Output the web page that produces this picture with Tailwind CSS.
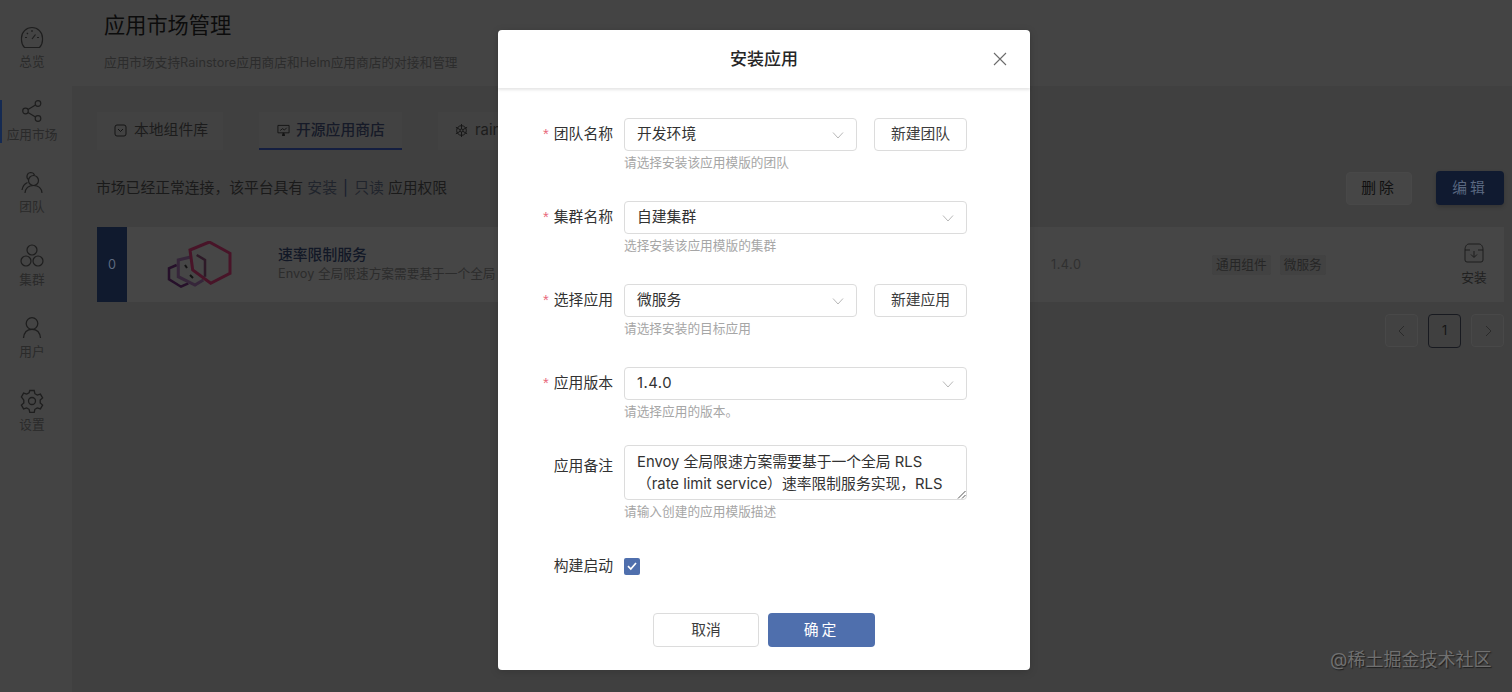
<!DOCTYPE html>
<html lang="zh">
<head>
<meta charset="utf-8">
<title>安装应用</title>
<script src="https://cdn.jsdelivr.net/npm/@tailwindcss/browser@4"></script>
</head>
<body class="m-0 h-[692px] w-[1512px] overflow-hidden bg-[#404040] font-['Inter','Noto_Sans_CJK_SC',sans-serif] text-[#2e2e2e]">
<div class="flex h-[692px] w-[1512px]">
  <!-- sidebar -->
  <nav class="flex w-[72px] shrink-0 flex-col items-start bg-[#444444] pt-[26px] pr-[8px] text-[12.7px] text-[#2a2a2a] [&>div]:h-[72.5px]">
    <div class="relative flex w-full flex-col items-center">
      <svg class="h-6 w-6" viewBox="0 0 24 24" fill="none" stroke="#1e1e1e" stroke-width="1.2"><path d="M4.500 21.500C2.600 19.600 1.500 17 1.500 14V12a10.500 10.500 0 0 1 21 0v2c0 3-1.100 5.600-3 7.500z"/><path d="M12 13l3.500-4.500M12 4v2M5 11.500h2M17 11.500h2M6.800 6.800l1.200 1.200"/></svg>
      <span class="mt-[3px] leading-[18px]">总览</span>
    </div>
    <div class="relative flex w-full flex-col items-center">
      <span class="absolute left-0 top-[1.5px] h-[43px] w-[2px] bg-[#152a52]"></span>
      <svg class="h-6 w-6" viewBox="0 0 24 24" fill="none" stroke="#1e1e1e" stroke-width="1.200"><circle cx="18" cy="4.500" r="2.800"/><circle cx="5.500" cy="12" r="2.800"/><circle cx="18" cy="19.500" r="2.800"/><path d="M8 10.500l7.500-4.500M8 13.500l7.500 4.500"/></svg>
      <span class="mt-[3px] whitespace-nowrap leading-[18px]">应用市场</span>
    </div>
    <div class="relative flex w-full flex-col items-center">
      <svg class="h-6 w-6" viewBox="0 0 24 24" fill="none" stroke="#1e1e1e" stroke-width="1.200"><circle cx="13.500" cy="9.500" r="5"/><path d="M5 22c.5-5 3.500-7.500 8.500-7.500S21.500 17 22 22M8.500 8.500C6 7 6.500 2 10.500 1.500c2 0 3.500 1 4 2.500M7.500 11.500C4 13 2.500 16 2 19"/></svg>
      <span class="mt-[3px] leading-[18px]">团队</span>
    </div>
    <div class="relative flex w-full flex-col items-center">
      <svg class="h-6 w-6" viewBox="0 0 24 24" fill="none" stroke="#1e1e1e" stroke-width="1.200"><circle cx="12" cy="6" r="5"/><circle cx="6" cy="17" r="5"/><circle cx="18" cy="17" r="5"/></svg>
      <span class="mt-[3px] leading-[18px]">集群</span>
    </div>
    <div class="relative flex w-full flex-col items-center">
      <svg class="h-6 w-6" viewBox="0 0 24 24" fill="none" stroke="#1e1e1e" stroke-width="1.300"><circle cx="12" cy="7.500" r="5.800"/><path d="M3.500 22c.5-5.500 3.800-8.700 8.500-8.700s8 3.200 8.500 8.700"/></svg>
      <span class="mt-[3px] leading-[18px]">用户</span>
    </div>
    <div class="relative flex w-full flex-col items-center">
      <svg class="h-6 w-6" viewBox="0 0 24 24" fill="none" stroke="#1e1e1e" stroke-width="1.300"><path d="M9.800 1.500h4.400l.7 3.200 2.400 1.400 3.100-1 2.200 3.800-2.400 2.200v2.800l2.400 2.200-2.200 3.800-3.100-1-2.400 1.400-.7 3.200H9.800l-.7-3.200-2.400-1.400-3.100 1-2.200-3.800 2.400-2.200v-2.800L1.400 7.900l2.200-3.800 3.100 1 2.400-1.400z"/><circle cx="12" cy="12" r="3.500"/></svg>
      <span class="mt-[3px] leading-[18px]">设置</span>
    </div>
  </nav>

  <!-- main -->
  <main class="flex min-w-0 flex-1 flex-col">
    <header class="h-[86px] shrink-0 bg-[#444444] pl-[32px]">
      <h1 class="pt-[10px] text-[21.2px] font-normal leading-[30px] text-[#0c0c0c]">应用市场管理</h1>
      <p class="mt-[14px] text-[12.7px] leading-[18px] text-[#2c2c2c]">应用市场支持Rainstore应用商店和Helm应用商店的对接和管理</p>
    </header>
    <section class="flex-1 pl-[25px] pr-[8px]">
      <div class="flex h-[64px] items-end gap-[36px] text-[14.8px] text-[#1c1c1c]">
        <div class="flex h-[38px] w-[126px] items-center gap-[7px] bg-[#424242] pb-[2px] pl-[17px]">
          <svg class="h-[13px] w-[13px]" viewBox="0 0 13 13" fill="none" stroke="#141414" stroke-width="1"><rect x="1" y="1" width="11" height="11" rx="2"/><path d="M4 5l2.500 2.500L9 5"/></svg>
          本地组件库
        </div>
        <div class="flex h-[38px] w-[143px] items-center gap-[6px] border-b-2 border-[#141e40] bg-[#424242] pl-[18px] font-medium text-[#161a28]">
          <svg class="h-[13px] w-[13px]" viewBox="0 0 14 14" fill="none" stroke="#141414" stroke-width="1"><path d="M1 1.500h12v8H1z"/><path d="M3.500 7l2.500-2 2 1.500 2.500-2.500"/><path d="M5.500 12h3M7 9.500V12" stroke-width="2"/></svg>
          开源应用商店
        </div>
        <div class="flex h-[38px] w-[130px] items-center gap-[7px] bg-[#424242] pb-[2px] pl-[17px]">
          <svg class="h-[13px] w-[13px]" viewBox="0 0 14 14" fill="none" stroke="#141414" stroke-width="1"><circle cx="7" cy="7" r="5.200"/><circle cx="7" cy="7" r="1.600"/><path d="M7 0v5.400M7 8.600V14M1 3.500l4.600 2.700M8.400 7.800L13 10.500M1 10.500l4.600-2.700M8.400 6.200L13 3.500"/></svg>
          rainbond
        </div>
      </div>
      <div class="mt-[20px] flex h-[36px] items-center justify-between">
        <p class="ml-[-1px] text-[14.8px] leading-[22px] text-[#1a1a1a]">市场已经正常连接，该平台具有 <span class="text-[#20242c]">安装</span> <span class="mx-[2px] text-[#161e2e]">|</span> <span class="text-[#20242c]">只读</span> 应用权限</p>
        <div class="flex items-center gap-[24px]">
          <span class="flex h-[33px] w-[66px] items-center justify-center rounded-[4px] border border-[#484848] bg-[#464646] text-[14.8px] tracking-[3px] text-[#101010]">删除</span>
          <span class="flex h-[34px] w-[68px] items-center justify-center rounded-[4px] bg-[#101a30] text-[14.8px] tracking-[3px] text-[#5a6880] shadow-[0_2px_4px_rgba(0,0,0,0.2)]">编辑</span>
        </div>
      </div>
      <article class="mt-[21px] flex h-[75px] items-center bg-[#464646]">
        <div class="flex h-full w-[30px] items-center justify-center bg-[#101a2e] text-[12.7px] text-[#5e6a80]">0</div>
        <svg class="ml-[40px] h-[48px] w-[66px]" viewBox="0 0 66 48" fill="none">
          <path d="M9.700 24L2 27.300v11l12 7.400 7.300-3.400" stroke="#26102a" stroke-width="2.500"/>
          <path d="M24.700 15.700L11.300 19v16.700L28 44l8.300-5" stroke="#36263a" stroke-width="3"/>
          <path d="M42.300 1L63 12.300v20L43.700 42.300l-18-13.300L23 9z" stroke="#481428" stroke-width="3"/>
          <path d="M29.700 14L38 19v16.700" stroke="#2e1a28" stroke-width="2.500"/>
          <path d="M18 24l2 3M23 34l3 3" stroke="#141414" stroke-width="2"/>
        </svg>
        <div class="ml-[45px] w-[220px] shrink-0 whitespace-nowrap pb-[3px]">
          <h2 class="text-[14.8px] font-medium leading-[22px] text-[#121826]">速率限制服务</h2>
          <p class="mt-[-1px] text-[12.7px] leading-[18px] text-[#2c2c2c]">Envoy 全局限速方案需要基于一个全局</p>
        </div>
        <span class="ml-[553px] w-[161px] shrink-0 text-[12.7px] tracking-[0.5px] text-[#303030]">1.4.0</span>
        <div class="flex shrink-0 gap-[9px] text-[12.7px] text-[#262626]">
          <span class="rounded-[2px] bg-[#424242] px-[4px] leading-[20px]">通用组件</span>
          <span class="rounded-[2px] bg-[#424242] px-[4px] leading-[20px]">微服务</span>
        </div>
        <div class="ml-auto flex w-[60px] flex-col items-center text-[12.7px] text-[#202020]">
          <svg class="h-[20px] w-[20px]" viewBox="0 0 20 20" fill="none" stroke="#1c1c1c" stroke-width="1"><path d="M1 7c0-4 2-6 4-6h10c2 0 4 2 4 6v10a2 2 0 0 1-2 2H3a2 2 0 0 1-2-2zM1 7h5M14 7h5"/><path d="M10 8v6M7 11.500l3 3 3-3"/></svg>
          <span class="mt-[6px] leading-[18px]">安装</span>
        </div>
      </article>
      <div class="mt-[12px] flex justify-end gap-[10px] text-[12.7px] text-[#141414]">
        <span class="flex h-[33px] w-[33px] items-center justify-center rounded-[4px] border border-[#484848] bg-[#424242]"><svg class="h-[12px] w-[12px]" viewBox="0 0 12 12" fill="none" stroke="#2a2a2a"><path d="M8 1L3 6l5 5"/></svg></span>
        <span class="flex h-[34px] w-[33px] items-center justify-center rounded-[4px] border border-[#181a20]">1</span>
        <span class="flex h-[33px] w-[33px] items-center justify-center rounded-[4px] border border-[#484848] bg-[#424242]"><svg class="h-[12px] w-[12px]" viewBox="0 0 12 12" fill="none" stroke="#2a2a2a"><path d="M4 1l5 5-5 5"/></svg></span>
      </div>
    </section>
  </main>
</div>

<!-- modal -->
<div role="dialog" class="absolute left-[498px] top-[30px] flex h-[640px] w-[532px] flex-col rounded-[4px] bg-white text-[14.8px] text-[#323232] shadow-[0_2px_8px_rgba(0,0,0,0.15)]">
  <div class="relative flex h-[58px] shrink-0 items-center justify-center rounded-t-[4px] shadow-[0_2px_3px_rgba(0,0,0,0.1)]">
    <h3 class="text-[17px] font-medium leading-[24px] text-[#262626]">安装应用</h3>
    <svg class="absolute right-[23px] top-[22px] h-[14px] w-[14px]" viewBox="0 0 14 14" fill="none" stroke="#6b6b6b" stroke-width="1.100"><path d="M1 1l12 12M13 1L1 13"/></svg>
  </div>
  <form class="flex flex-1 flex-col pt-[30px]">
    <div class="flex h-[83px] items-start">
      <label class="flex h-[32px] w-[115px] shrink-0 items-center justify-end"><i class="mr-[5px] font-['Liberation_Sans',sans-serif] not-italic text-[#e8677a]">*</i>团队名称</label>
      <div class="ml-[11px]">
        <div class="flex gap-[17px]">
          <div class="flex h-[33px] w-[233px] items-center justify-between rounded-[4px] border border-[#dcdcdc] pl-[12px] pr-[12px]">开发环境<svg class="h-[12px] w-[12px]" viewBox="0 0 12 12" fill="none" stroke="#b8b8b8"><path d="M1 3.500l5 5.500 5-5.500"/></svg></div>
          <div class="flex h-[33px] w-[93px] items-center justify-center rounded-[4px] border border-[#dcdcdc] text-[#3c3c3c]">新建团队</div>
        </div>
        <p class="text-[12.7px] leading-[24px] text-[#a6a6a6]">请选择安装该应用模版的团队</p>
      </div>
    </div>
    <div class="flex h-[83px] items-start">
      <label class="flex h-[32px] w-[115px] shrink-0 items-center justify-end"><i class="mr-[5px] font-['Liberation_Sans',sans-serif] not-italic text-[#e8677a]">*</i>集群名称</label>
      <div class="ml-[11px]">
        <div class="flex h-[33px] w-[343px] items-center justify-between rounded-[4px] border border-[#dcdcdc] pl-[12px] pr-[12px]">自建集群<svg class="h-[12px] w-[12px]" viewBox="0 0 12 12" fill="none" stroke="#b8b8b8"><path d="M1 3.500l5 5.500 5-5.500"/></svg></div>
        <p class="text-[12.7px] leading-[24px] text-[#a6a6a6]">选择安装该应用模版的集群</p>
      </div>
    </div>
    <div class="flex h-[83px] items-start">
      <label class="flex h-[32px] w-[115px] shrink-0 items-center justify-end"><i class="mr-[5px] font-['Liberation_Sans',sans-serif] not-italic text-[#e8677a]">*</i>选择应用</label>
      <div class="ml-[11px]">
        <div class="flex gap-[17px]">
          <div class="flex h-[33px] w-[233px] items-center justify-between rounded-[4px] border border-[#dcdcdc] pl-[12px] pr-[12px]">微服务<svg class="h-[12px] w-[12px]" viewBox="0 0 12 12" fill="none" stroke="#b8b8b8"><path d="M1 3.500l5 5.500 5-5.500"/></svg></div>
          <div class="flex h-[33px] w-[93px] items-center justify-center rounded-[4px] border border-[#dcdcdc] text-[#3c3c3c]">新建应用</div>
        </div>
        <p class="text-[12.7px] leading-[24px] text-[#a6a6a6]">请选择安装的目标应用</p>
      </div>
    </div>
    <div class="flex h-[78px] items-start">
      <label class="flex h-[32px] w-[115px] shrink-0 items-center justify-end"><i class="mr-[5px] font-['Liberation_Sans',sans-serif] not-italic text-[#e8677a]">*</i>应用版本</label>
      <div class="ml-[11px]">
        <div class="flex h-[33px] w-[343px] items-center justify-between rounded-[4px] border border-[#dcdcdc] pl-[12px] pr-[12px]"><span class="tracking-[0.5px]">1.4.0</span><svg class="h-[12px] w-[12px]" viewBox="0 0 12 12" fill="none" stroke="#b8b8b8"><path d="M1 3.500l5 5.500 5-5.500"/></svg></div>
        <p class="text-[12.7px] leading-[24px] text-[#a6a6a6]">请选择应用的版本。</p>
      </div>
    </div>
    <div class="flex h-[111px] items-start">
      <label class="flex h-[43px] w-[115px] shrink-0 items-center justify-end">应用备注</label>
      <div class="ml-[11px]">
        <div class="relative h-[55px] w-[343px]">
          <textarea readonly class="block h-[55px] w-[343px] resize-none overflow-hidden rounded-[4px] border border-[#dcdcdc] px-[12px] py-[5px] text-[14.8px] leading-[22px] text-[#323232]">Envoy 全局限速方案需要基于一个全局 RLS（rate limit service）速率限制服务实现，RLS</textarea>
          <svg class="absolute bottom-[1px] right-[1px] h-[9px] w-[9px]" viewBox="0 0 9 9" stroke="#555" fill="none"><path d="M1 8.500L8.500 1M5 8.500L8.500 5"/></svg>
        </div>
        <p class="text-[12.7px] leading-[24px] text-[#a6a6a6]">请输入创建的应用模版描述</p>
      </div>
    </div>
    <div class="flex h-[20px] items-center">
      <label class="w-[115px] shrink-0 text-right">构建启动</label>
      <span class="ml-[11px] flex h-[17px] w-[16px] items-center justify-center rounded-[2px] bg-[#4f6fad]"><svg class="h-[10px] w-[10px]" viewBox="0 0 10 10" fill="none" stroke="#fff" stroke-width="1.700"><path d="M1 5.200l2.800 2.800L9 2"/></svg></span>
    </div>
    <div class="mt-[37px] flex justify-center gap-[9px]">
      <button type="button" class="h-[34px] w-[106px] rounded-[4px] border border-[#dcdcdc] bg-white text-[#3c3c3c]">取消</button>
      <button type="button" class="h-[34px] w-[107px] rounded-[4px] bg-[#4f6fad] tracking-[3px] text-white">确定</button>
    </div>
  </form>
</div>

<!-- watermark -->
<span class="absolute left-[1330px] top-[648px] text-[18px] leading-[24px] text-[#707070] [text-shadow:1px_1px_1px_#1e1e1e]">@稀土掘金技术社区</span>
</body>
</html>
